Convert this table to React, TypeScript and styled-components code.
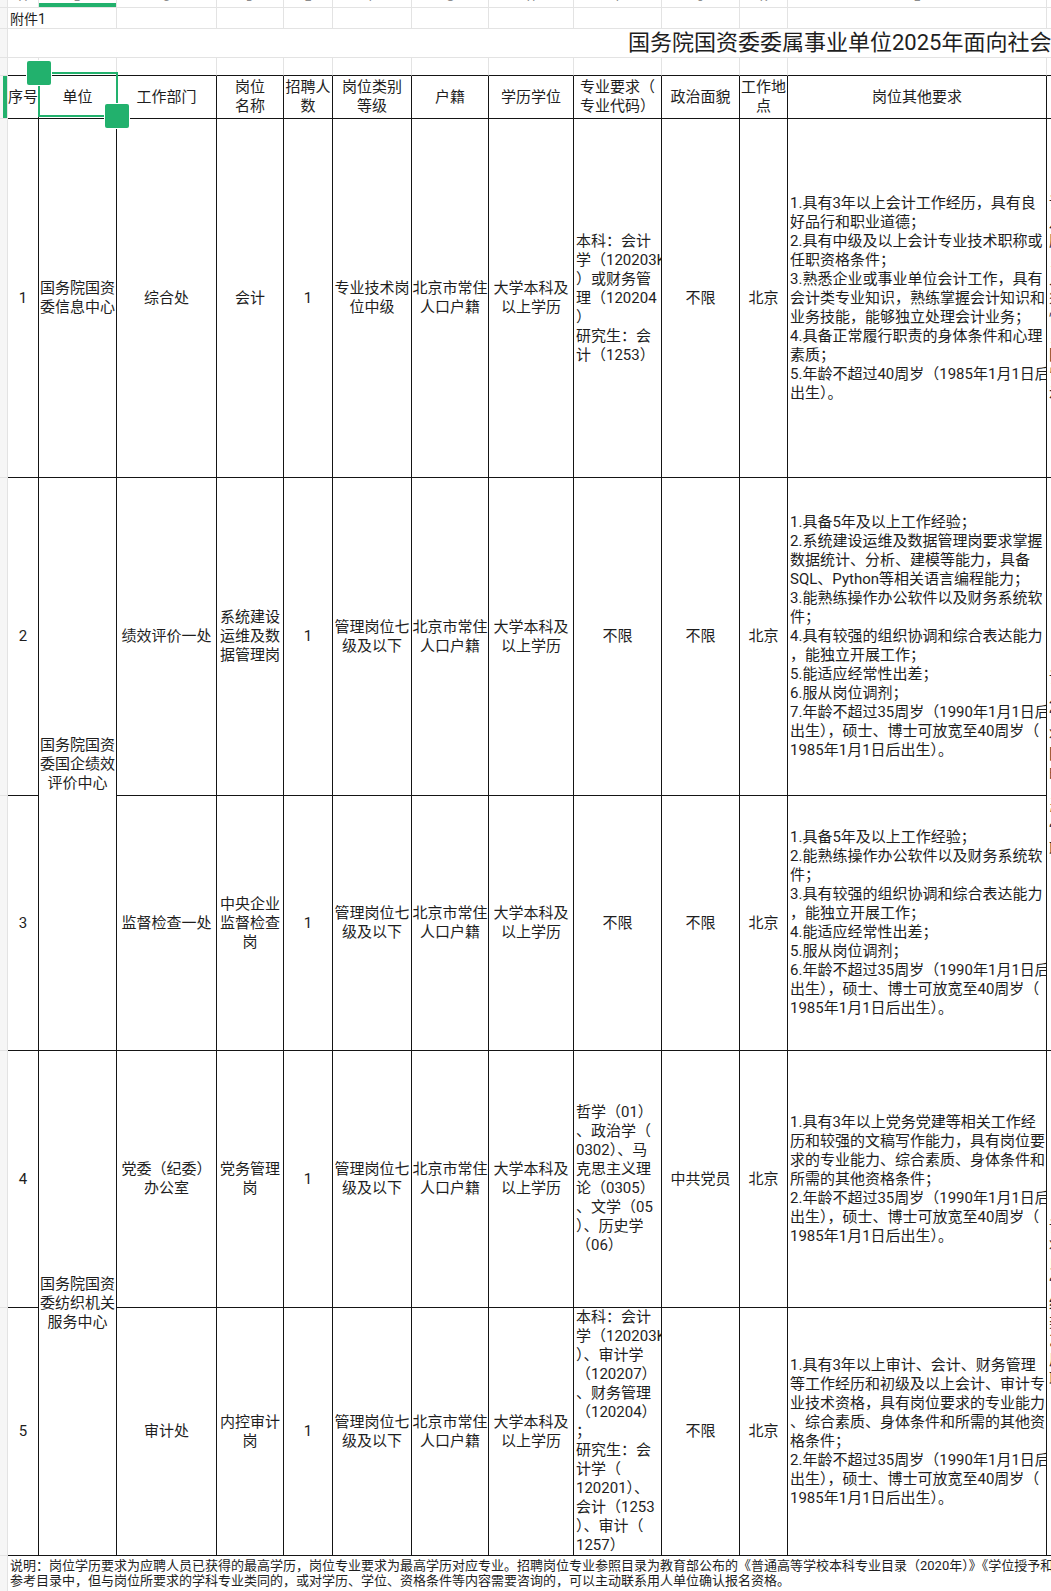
import React from "react";
import styled, { createGlobalStyle } from "styled-components";

const GREEN = "#22b16d";
const GRID = "#e3e3e3";
const LINE = "#151515";
const INK = "#1e1e1e";

const GlobalStyle = createGlobalStyle`
  html, body { margin: 0; padding: 0; background: #fff; }
  body {
    font-family: Roboto, "Noto Sans CJK SC", sans-serif;
    color: ${INK};
  }
`;

// spreadsheet column widths: gutter, A..M
const COLS = [8, 31, 78, 100, 67, 49, 79, 77, 85, 88, 78, 48, 259, 140];
const LETTERS = ["A", "B", "C", "D", "E", "F", "G", "H", "I", "J", "K", "L", "M"];

const HEAD = [
  "序号",
  "单位",
  "工作部门",
  "岗位\n名称",
  "招聘人\n数",
  "岗位类别\n等级",
  "户籍",
  "学历学位",
  "专业要求（\n专业代码）",
  "政治面貌",
  "工作地\n点",
  "岗位其他要求",
  "咨询方式",
];

type Span = { text: string; span: number };
type Row = {
  h: number;
  no: string;
  unit?: Span;
  dept: string;
  post: string;
  grade: string;
  major: string;
  majorLeft?: boolean;
  politic: string;
  other: string;
  extra?: Span;
};

const ROWS: Row[] = [
  {
    h: 359,
    no: "1",
    unit: { text: "国务院国资\n委信息中心", span: 1 },
    dept: "综合处",
    post: "会计",
    grade: "专业技术岗\n位中级",
    major: "本科：会计\n学（120203K\n）或财务管\n理（120204\n）\n研究生：会\n计（1253）",
    majorLeft: true,
    politic: "不限",
    other:
      "1.具有3年以上会计工作经历，具有良\n好品行和职业道德；\n2.具有中级及以上会计专业技术职称或\n任职资格条件；\n3.熟悉企业或事业单位会计工作，具有\n会计类专业知识，熟练掌握会计知识和\n业务技能，能够独立处理会计业务；\n4.具备正常履行职责的身体条件和心理\n素质；\n5.年龄不超过40周岁（1985年1月1日后\n出生）。",
    extra: {
      text: "请报考人员\n八月底前\n服从安排\n，\n入职后\n须签订协议\n性质说明\n，\n国资委\n留用考察\n示例",
      span: 1,
    },
  },
  {
    h: 318,
    no: "2",
    unit: { text: "国务院国资\n委国企绩效\n评价中心", span: 2 },
    dept: "绩效评价一处",
    post: "系统建设\n运维及数\n据管理岗",
    grade: "管理岗位七\n级及以下",
    major: "不限",
    politic: "不限",
    other:
      "1.具备5年及以上工作经验；\n2.系统建设运维及数据管理岗要求掌握\n数据统计、分析、建模等能力，具备\nSQL、Python等相关语言编程能力；\n3.能熟练操作办公软件以及财务系统软\n件；\n4.具有较强的组织协调和综合表达能力\n，能独立开展工作；\n5.能适应经常性出差；\n6.服从岗位调剂；\n7.年龄不超过35周岁（1990年1月1日后\n出生），硕士、博士可放宽至40周岁（\n1985年1月1日后出生）。",
    extra: {
      text: "请报考人员\n八月底前\n“国企\n将材料\n国资委\n邮箱\n，\n引导\n‘\n联系人",
      span: 2,
    },
  },
  {
    h: 255,
    no: "3",
    dept: "监督检查一处",
    post: "中央企业\n监督检查\n岗",
    grade: "管理岗位七\n级及以下",
    major: "不限",
    politic: "不限",
    other:
      "1.具备5年及以上工作经验；\n2.能熟练操作办公软件以及财务系统软\n件；\n3.具有较强的组织协调和综合表达能力\n，能独立开展工作；\n4.能适应经常性出差；\n5.服从岗位调剂；\n6.年龄不超过35周岁（1990年1月1日后\n出生），硕士、博士可放宽至40周岁（\n1985年1月1日后出生）。",
  },
  {
    h: 257,
    no: "4",
    unit: { text: "国务院国资\n委纺织机关\n服务中心", span: 2 },
    dept: "党委（纪委）\n办公室",
    post: "党务管理\n岗",
    grade: "管理岗位七\n级及以下",
    major:
      "哲学（01）\n、政治学（\n0302）、马\n克思主义理\n论（0305）\n、文学（05\n）、历史学\n（06）",
    majorLeft: true,
    politic: "中共党员",
    other:
      "1.具有3年以上党务党建等相关工作经\n历和较强的文稿写作能力，具有岗位要\n求的专业能力、综合素质、身体条件和\n所需的其他资格条件；\n2.年龄不超过35周岁（1990年1月1日后\n出生），硕士、博士可放宽至40周岁（\n1985年1月1日后出生）。",
    extra: {
      text: "请报考人员\n将报名表\n以邮件\n“\n纺织中心\n类别\n乙类\n居住地\n取得",
      span: 2,
    },
  },
  {
    h: 248,
    no: "5",
    dept: "审计处",
    post: "内控审计\n岗",
    grade: "管理岗位七\n级及以下",
    major:
      "本科：会计\n学（120203K\n）、审计学\n（120207）\n、财务管理\n（120204）\n；\n研究生：会\n计学（\n120201）、\n会计（1253\n）、审计（\n1257）",
    majorLeft: true,
    politic: "不限",
    other:
      "1.具有3年以上审计、会计、财务管理\n等工作经历和初级及以上会计、审计专\n业技术资格，具有岗位要求的专业能力\n、综合素质、身体条件和所需的其他资\n格条件；\n2.年龄不超过35周岁（1990年1月1日后\n出生），硕士、博士可放宽至40周岁（\n1985年1月1日后出生）。",
  },
];

const NOTE =
  "说明：岗位学历要求为应聘人员已获得的最高学历，岗位专业要求为最高学历对应专业。招聘岗位专业参照目录为教育部公布的《普通高等学校本科专业目录（2020年）》《学位授予和人才培养学科目录（2018年）》，对于所学专业接近但未列入\n参考目录中，但与岗位所要求的学科专业类同的，或对学历、学位、资格条件等内容需要咨询的，可以主动联系用人单位确认报名资格。";

const Sheet = styled.div`
  position: relative;
  width: 1051px;
  height: 1591px;
  overflow: hidden;
  background: #fff;
`;

const Grid = styled.table`
  border-collapse: separate;
  border-spacing: 0;
  table-layout: fixed;
  width: ${COLS.reduce((a, b) => a + b, 0)}px;
`;

const Col = styled.col<{ $w: number }>`
  width: ${(p) => p.$w}px;
`;

const Tr = styled.tr<{ $h: number }>`
  height: ${(p) => p.$h}px;
`;

const Gutter = styled.td<{ $mark?: boolean }>`
  position: relative;
  padding: 0;
  background: #f6f6f6;
  border-right: 1px solid ${GRID};
  border-bottom: 1px solid ${GRID};
  &::after {
    content: "";
    display: ${(p) => (p.$mark ? "block" : "none")};
    position: absolute;
    left: 3px;
    top: 0;
    bottom: 0;
    width: 4px;
    background: ${GREEN};
  }
`;

const LetterCell = styled.td<{ $active?: boolean }>`
  position: relative;
  padding: 0;
  overflow: hidden;
  text-align: center;
  vertical-align: bottom;
  font-size: 12px;
  line-height: 7px;
  color: #8c8c8c;
  border-right: 1px solid ${GRID};
  border-bottom: 1px solid ${GRID};
  span {
    position: relative;
    top: -6px;
  }
  &::after {
    content: "";
    display: ${(p) => (p.$active ? "block" : "none")};
    position: absolute;
    left: 0;
    right: 0;
    bottom: 0;
    height: 4px;
    background: ${GREEN};
  }
`;

const Blank = styled.td<{ $edge?: boolean }>`
  padding: 0;
  overflow: hidden;
  white-space: nowrap;
  border-right: 1px solid ${GRID};
  border-bottom: 1px solid ${(p) => (p.$edge ? LINE : GRID)};
`;

const Caption = styled(Blank)`
  padding: 3px 0 0 2px;
  font-size: 14px;
  line-height: 17px;
  vertical-align: middle;
`;

const Title = styled(Blank)`
  padding: 0 0 0 620px;
  font-size: 22px;
  line-height: 28px;
  vertical-align: middle;
  border-right: none;
`;

const Cell = styled.td<{ $left?: boolean }>`
  padding: ${(p) => (p.$left ? "0 0 0 2px" : "0")};
  overflow: hidden;
  white-space: pre;
  vertical-align: middle;
  text-align: ${(p) => (p.$left ? "left" : "center")};
  font-size: 15px;
  line-height: 19px;
  border-right: 1px solid ${LINE};
  border-bottom: 1px solid ${LINE};
`;

const Note = styled.td`
  padding: 2px 0 0 2px;
  overflow: hidden;
  white-space: pre;
  vertical-align: top;
  font-size: 13px;
  line-height: 15px;
`;

const Selection = styled.div`
  position: absolute;
  left: 38px;
  top: 72px;
  width: 80px;
  height: 45px;
  box-sizing: border-box;
  border: 2px solid ${GREEN};
  pointer-events: none;
`;

const Handle = styled.div<{ $x: number; $y: number }>`
  position: absolute;
  left: ${(p) => p.$x}px;
  top: ${(p) => p.$y}px;
  width: 24px;
  height: 24px;
  border-radius: 2px;
  background: ${GREEN};
  box-shadow: 0 0 0 1px #fff;
`;

function DataRow({ row }: { row: Row }) {
  return (
    <Tr $h={row.h}>
      <Gutter />
      <Cell>{row.no}</Cell>
      {row.unit && <Cell rowSpan={row.unit.span}>{row.unit.text}</Cell>}
      <Cell>{row.dept}</Cell>
      <Cell>{row.post}</Cell>
      <Cell>1</Cell>
      <Cell>{row.grade}</Cell>
      <Cell>{"北京市常住\n人口户籍"}</Cell>
      <Cell>{"大学本科及\n以上学历"}</Cell>
      <Cell $left={row.majorLeft}>{row.major}</Cell>
      <Cell>{row.politic}</Cell>
      <Cell>北京</Cell>
      <Cell $left>{row.other}</Cell>
      {row.extra && (
        <Cell $left rowSpan={row.extra.span}>
          {row.extra.text}
        </Cell>
      )}
    </Tr>
  );
}

export default function App() {
  return (
    <>
      <GlobalStyle />
      <Sheet>
        <Grid>
          <colgroup>
            {COLS.map((w, i) => (
              <Col key={i} $w={w} />
            ))}
          </colgroup>
          <tbody>
            <Tr $h={7}>
              <Gutter />
              {LETTERS.map((l) => (
                <LetterCell key={l} $active={l === "B"}>
                  <span>{l}</span>
                </LetterCell>
              ))}
            </Tr>
            <Tr $h={20}>
              <Gutter />
              <Caption colSpan={2}>附件1</Caption>
              {LETTERS.slice(2).map((l) => (
                <Blank key={l} />
              ))}
            </Tr>
            <Tr $h={28}>
              <Gutter />
              <Title colSpan={13}>国务院国资委委属事业单位2025年面向社会公开招聘工作人员岗位信息表</Title>
            </Tr>
            <Tr $h={18}>
              <Gutter />
              {LETTERS.map((l) => (
                <Blank key={l} $edge />
              ))}
            </Tr>
            <Tr $h={43}>
              <Gutter $mark />
              {HEAD.map((h) => (
                <Cell key={h}>{h}</Cell>
              ))}
            </Tr>
            {ROWS.map((r) => (
              <DataRow key={r.no} row={r} />
            ))}
            <Tr $h={38}>
              <Gutter />
              <Note colSpan={13}>{NOTE}</Note>
            </Tr>
          </tbody>
        </Grid>
        <Selection />
        <Handle $x={27} $y={61} />
        <Handle $x={105} $y={104} />
      </Sheet>
    </>
  );
}
